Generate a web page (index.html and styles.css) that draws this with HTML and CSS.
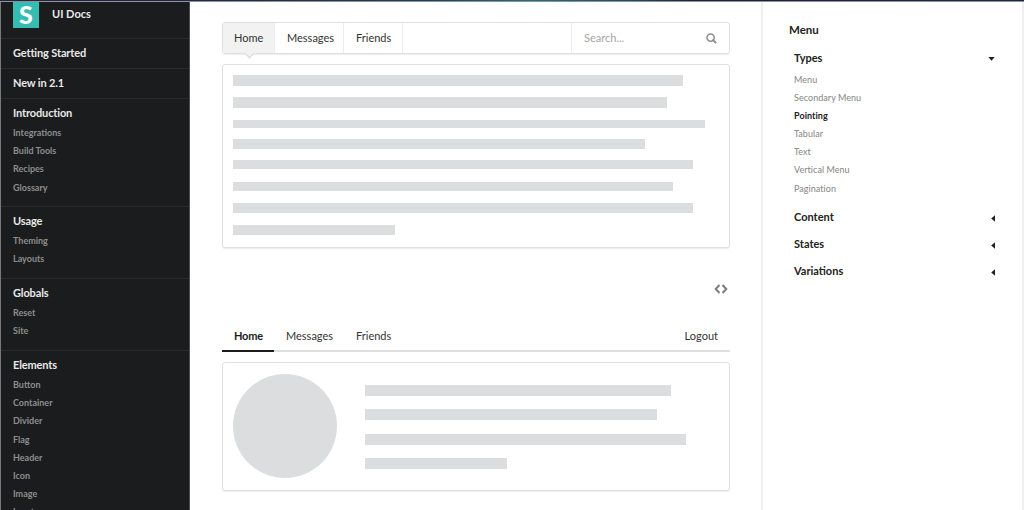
FILE: index.html
```html
<!DOCTYPE html>
<html lang="en">
<head>
    <meta charset="UTF-8">
    <meta name="viewport" content="width=device-width, initial-scale=1.0">
    <title>Menu | UI Docs</title>
    <link rel="stylesheet" href="styles.css">
</head>
<body>
    <div class="topbar"></div>
    <div class="page">
        <nav class="sidebar">
            <div class="brand">
                <span class="logo">S</span>
                <b>UI Docs</b>
            </div>
            <div class="section"><h4>Getting Started</h4></div>
            <div class="section"><h4>New in 2.1</h4></div>
            <div class="section">
                <h4>Introduction</h4>
                <a>Integrations</a>
                <a>Build Tools</a>
                <a>Recipes</a>
                <a>Glossary</a>
            </div>
            <div class="section">
                <h4>Usage</h4>
                <a>Theming</a>
                <a>Layouts</a>
            </div>
            <div class="section">
                <h4>Globals</h4>
                <a>Reset</a>
                <a>Site</a>
            </div>
            <div class="section">
                <h4>Elements</h4>
                <a>Button</a>
                <a>Container</a>
                <a>Divider</a>
                <a>Flag</a>
                <a>Header</a>
                <a>Icon</a>
                <a>Image</a>
                <a>Input</a>
            </div>
        </nav>

        <main class="content">
            <div class="menu">
                <a class="item active">Home</a>
                <a class="item messages">Messages</a>
                <a class="item friends">Friends</a>
                <div class="search">
                    <span>Search...</span>
                    <svg width="11" height="11" viewBox="0 0 11 11">
                        <circle cx="4.6" cy="4.6" r="3.6" fill="none" stroke="#8e8e8e" stroke-width="1.6"/>
                        <path d="M7.3 7.3L9.6 9.6" stroke="#8e8e8e" stroke-width="2" stroke-linecap="round"/>
                    </svg>
                </div>
            </div>

            <div class="segment text-segment">
                <div class="line l1"></div>
                <div class="line l2"></div>
                <div class="line l3"></div>
                <div class="line l4"></div>
                <div class="line l5"></div>
                <div class="line l6"></div>
                <div class="line l7"></div>
                <div class="line l8"></div>
            </div>

            <div class="code-toggle">
                <svg width="14" height="10" viewBox="0 0 14 10">
                    <path d="M5.5 1L1.7 5L5.5 9M8.5 1L12.3 5L8.5 9" fill="none" stroke="#7c7c7c" stroke-width="2"/>
                </svg>
            </div>

            <div class="tabs">
                <a class="tab active">Home</a>
                <a class="tab messages">Messages</a>
                <a class="tab">Friends</a>
                <a class="tab logout">Logout</a>
            </div>

            <div class="segment media-segment">
                <div class="avatar"></div>
                <div class="lines">
                    <div class="line m1"></div>
                    <div class="line m2"></div>
                    <div class="line m3"></div>
                    <div class="line m4"></div>
                </div>
            </div>
        </main>

        <aside class="toc">
            <h3>Menu</h3>
            <div class="group">
                <h5>Types <svg width="7" height="4" viewBox="0 0 7 4"><path d="M0.3 0H6.7L3.5 3.8Z" fill="#222"/></svg></h5>
                <a>Menu</a>
                <a>Secondary Menu</a>
                <a class="current">Pointing</a>
                <a>Tabular</a>
                <a>Text</a>
                <a>Vertical Menu</a>
                <a>Pagination</a>
            </div>
            <h5>Content <svg width="4" height="7" viewBox="0 0 4 7"><path d="M4 0.3V6.7L0.2 3.5Z" fill="#222"/></svg></h5>
            <h5>States <svg width="4" height="7" viewBox="0 0 4 7"><path d="M4 0.3V6.7L0.2 3.5Z" fill="#222"/></svg></h5>
            <h5>Variations <svg width="4" height="7" viewBox="0 0 4 7"><path d="M4 0.3V6.7L0.2 3.5Z" fill="#222"/></svg></h5>
        </aside>
    </div>
</body>
</html>
```

FILE: styles.css
```css
* {
    box-sizing: border-box;
}

body {
    margin: 0;
    height: 510px;
    overflow: hidden;
    background: #fff;
    font-family: Lato, "Liberation Sans", sans-serif;
    font-size: 11px;
    color: #333;
}

h3, h4, h5 {
    margin: 0;
}

.topbar {
    height: 2px;
    background: linear-gradient(90deg, #22253a, #202848 20%, #1e4058 42%, #286f78 52%, #1f4a5c 62%, #20203a 68%, #1f2548);
    border-bottom: 1px solid #8f929d;
}

.page {
    display: flex;
    height: 508px;
}

/* left navigation */
.sidebar {
    width: 190px;
    background: #1b1c1d;
    border-left: 1px solid #77797a;
    border-right: 1px solid #4c4d4e;
    overflow: hidden;
}

.brand {
    display: flex;
    height: 36px;
    padding-left: 12px;
    color: #e8e8e8;
    font-size: 11px;
    line-height: 23px;
}

.logo {
    width: 26px;
    height: 26px;
    margin-right: 13px;
    background: #35bdb2;
    color: #fff;
    font-size: 25px;
    font-weight: 900;
    line-height: 24px;
    text-align: center;
}

.section {
    border-top: 1px solid #2a2b2c;
    padding: 5px 0 9px 12px;
}

.section h4 {
    height: 20px;
    font-size: 11px;
    line-height: 17px;
    letter-spacing: -0.14px;
    font-variant-ligatures: common-ligatures;
    color: #e8e8e8;
}

.section:nth-child(2),
.section:nth-child(3) {
    padding-bottom: 4px;
}

.section a {
    display: block;
    font-size: 9px;
    font-weight: 700;
    line-height: 18.2px;
    color: #8d8e8e;
}

.section:nth-child(4) {
    height: 108px;
}

.section:nth-child(5),
.section:nth-child(6) {
    height: 72px;
}

/* examples */
.content {
    width: 571px;
    padding: 20px 31px 0 32px;
}

.menu {
    display: flex;
    height: 32px;
    border: 1px solid #e0e0e1;
    border-radius: 3px;
    box-shadow: 0 1px 1px rgba(34, 36, 38, 0.08);
    line-height: 30px;
}

.item {
    width: 59px;
    padding-left: 12px;
    border-right: 1px solid #ececec;
}

.item.active {
    position: relative;
    width: 52px;
    padding-left: 11px;
    background: #f2f2f2;
}

.item.active::after {
    content: "";
    position: absolute;
    left: 23px;
    bottom: -4px;
    width: 6px;
    height: 6px;
    background: #f2f2f2;
    border: solid #d8d8d9;
    border-width: 0 1px 1px 0;
    transform: rotate(45deg);
}

.item.messages {
    width: 69px;
}

.search {
    display: flex;
    align-items: center;
    justify-content: space-between;
    width: 158px;
    margin-left: auto;
    padding: 0 12px 0 12px;
    border-left: 1px solid #ececec;
    color: #a5a5a5;
}

.segment {
    border: 1px solid #e0e0e1;
    border-radius: 3px;
    box-shadow: 0 1px 1px rgba(34, 36, 38, 0.08);
}

.line {
    height: 11px;
    background: #dcddde;
}

.text-segment {
    height: 184px;
    margin-top: 10px;
    padding: 10px;
}

.l1 { width: 450px; margin-bottom: 11px; }
.l2 { width: 434px; margin-bottom: 12px; }
.l3 { width: 472px; height: 8px; margin-bottom: 11px; }
.l4 { width: 412px; height: 10px; margin-bottom: 11px; }
.l5 { width: 460px; height: 9px; margin-bottom: 13px; }
.l6 { width: 440px; height: 9px; margin-bottom: 12px; }
.l7 { width: 460px; height: 10px; margin-bottom: 12px; }
.l8 { width: 162px; height: 10px; }

.code-toggle {
    display: flex;
    justify-content: flex-end;
    height: 73px;
    padding: 36px 2px 0 0;
}

.tabs {
    display: flex;
    height: 31px;
    border-bottom: 2px solid #dedfdf;
    line-height: 30px;
}

.tab {
    height: 31px;
    padding-left: 12px;
}

.tab.active {
    width: 52px;
    border-bottom: 2px solid #1b1c1d;
    color: #1b1c1d;
    font-weight: 700;
    letter-spacing: -0.2px;
}

.tab.messages {
    width: 70px;
}

.tab.logout {
    margin-left: auto;
    padding-right: 12px;
}

.media-segment {
    display: flex;
    height: 129px;
    margin-top: 10px;
    padding: 11px 10px;
}

.avatar {
    width: 104px;
    height: 104px;
    border-radius: 50%;
    background: #dcddde;
}

.lines {
    display: flex;
    flex-direction: column;
    gap: 13.3px;
    margin-left: 28px;
    padding-top: 11px;
}

.m1 { width: 306px; }
.m2 { width: 292px; }
.m3 { width: 321px; }
.m4 { width: 142px; }

/* page contents on the right */
.toc {
    width: 263px;
    padding: 19px 27px 0 26px;
    border-left: 2px solid #efefef;
    border-right: 2px solid #efefef;
    color: #222;
}

.toc h3 {
    font-size: 11.5px;
    line-height: 18px;
}

.toc h5 {
    display: flex;
    align-items: center;
    justify-content: space-between;
    height: 27px;
    padding-left: 5px;
    font-size: 11px;
    line-height: 14px;
}

.toc h5 svg {
    position: relative;
    top: 1px;
}

.group {
    padding: 5px 0 6px;
}

.group a {
    display: block;
    padding-left: 5px;
    font-size: 9px;
    line-height: 18.1px;
    letter-spacing: 0.05px;
    color: #858585;
}

.group .current {
    color: #1b1c1d;
    font-weight: 700;
}
```
